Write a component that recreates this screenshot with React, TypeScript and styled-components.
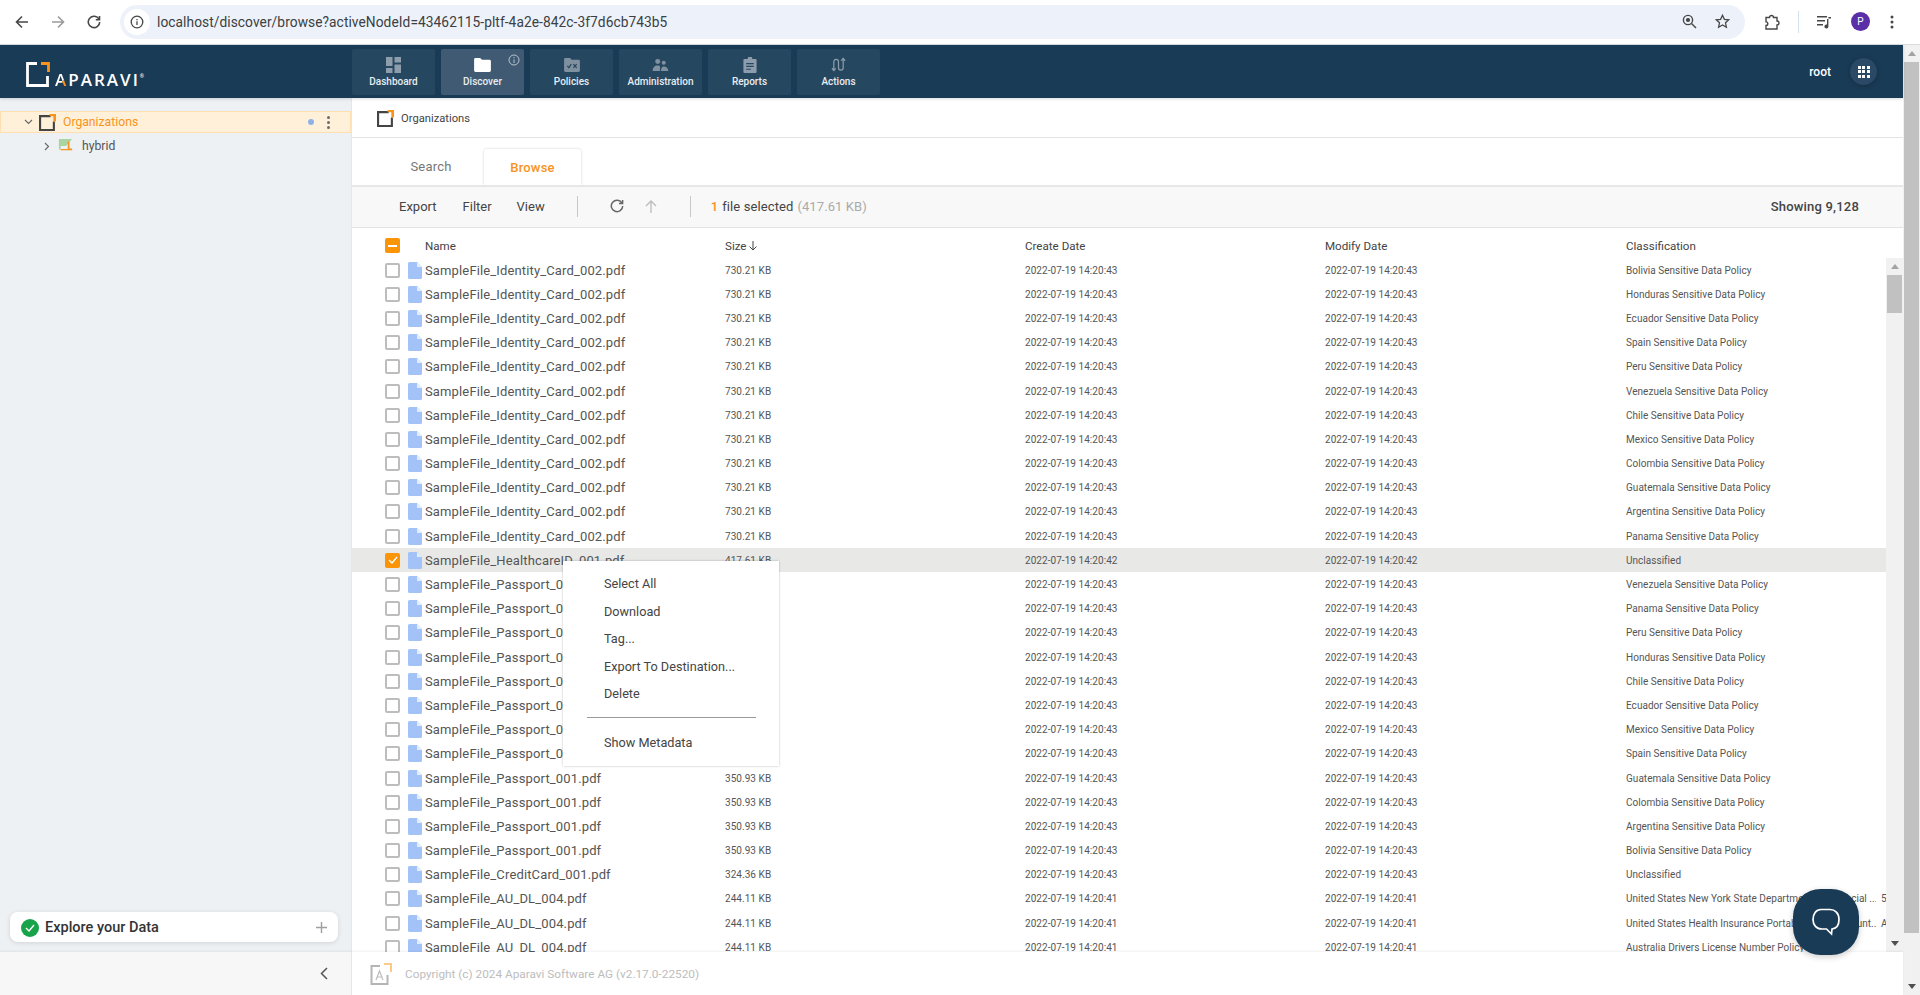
import React from "react";
import styled, { createGlobalStyle } from "styled-components";

const Global = createGlobalStyle`
  html, body { margin: 0; padding: 0; height: 995px; overflow: hidden; background: #fff; }
  * { box-sizing: border-box; }
  body { font-family: Roboto, "Liberation Sans", sans-serif; color: #444; }
`;

const Page = styled.div`
  position: relative; width: 1920px; height: 995px; display: flex; flex-direction: column; overflow: hidden;
`;
const BrowserBar = styled.div`
  height: 45px; flex: none; background: #fff; border-bottom: 1px solid #dadce0; display: flex; align-items: center; padding: 0 0 1px 12px;
`;
const BrowserBtn = styled.div<{ $w?: number }>`
  width: ${p => p.$w ?? 36}px; height: 36px; flex: none; display: flex; align-items: center; justify-content: center;
`;
const Omnibox = styled.div`
  flex: none; margin-left: 16px; width: 1625px; height: 34px; border-radius: 17px; background: #edf2fa; display: flex; align-items: center; padding: 0 6px 0 4px;
`;
const InfoChip = styled.div`
  width: 26px; height: 26px; border-radius: 50%; background: #fff; display: flex; align-items: center; justify-content: center; flex: none;
`;
const Url = styled.span`
  margin-left: 7px; font-size: 13.75px; color: #3c4043; flex: 1; white-space: nowrap; letter-spacing: 0.06px;
`;
const OmniIcon = styled.div`
  width: 33px; display: flex; justify-content: center; flex: none; line-height: 0;
`;
const BarRight = styled.div`
  display: flex; align-items: center; flex: none; margin-left: 10px;
`;
const ExtIcon = styled.div` margin-left: 9px; line-height: 0; `;
const BarSep = styled.div`
  width: 1px; height: 22px; background: #d5e3ee; margin: 0 18px 0 18px;
`;
const Avatar = styled.div`
  width: 19px; height: 19px; border-radius: 50%; background: #5a2ea6; color: #fff; font-size: 10px; display: flex; align-items: center; justify-content: center; margin: 0 20px 0 19px; flex: none;
`;
const BarIcon = styled.div` line-height: 0; `;

const Body = styled.div`
  flex: 1; min-height: 0; display: flex;
`;
const AppColumn = styled.div`
  flex: 1; min-width: 0; display: flex; flex-direction: column;
`;
const OuterScroll = styled.div`
  width: 17px; flex: none; background: #f1f1f1; display: flex; flex-direction: column; align-items: center;
`;
const ArrowBtn = styled.div<{ $h: number }>`
  height: ${p => p.$h}px; flex: none; width: 100%; display: flex; align-items: center; justify-content: center;
`;
const OuterThumb = styled.div`
  width: 15px; height: 871px; background: #c1c1c1; flex: none;
`;
const Spacer = styled.div` flex: 1; `;

const Header = styled.header`
  height: 53px; flex: none; background: #1a3b56; display: flex; align-items: center; box-shadow: 0 1px 3px rgba(0,0,0,.15); position: relative; z-index: 2;
`;
const LogoBox = styled.div`
  width: 352px; flex: none; display: flex; align-items: flex-end; padding: 0 0 3px 26px; height: 37px;
`;
const LogoText = styled.span`
  font-size: 17px; font-weight: 600; color: #fff; letter-spacing: 2px; margin-left: 5px; line-height: 15px; font-family: "Open Sans", sans-serif;
  sup { font-size: 5px; vertical-align: 8px; letter-spacing: 0; }
`;
const LogoA = styled.span`
  background: linear-gradient(125deg, #fff 58%, #f7941d 58%);
  -webkit-background-clip: text; background-clip: text; color: transparent;
`;
const Nav = styled.nav` display: flex; gap: 6px; `;
const NavBtn = styled.div<{ $active?: boolean }>`
  position: relative; width: 83px; height: 46px; border-radius: 2px; background: ${p => p.$active ? "#3f5a72" : "#264760"};
  display: flex; flex-direction: column; align-items: center; padding-top: 7px; color: #e8edf1; font-size: 10px; font-weight: 500;
`;
const NavIcon = styled.div`
  height: 18px; display: flex; align-items: center; justify-content: center; margin-bottom: 2px;
`;
const NavInfo = styled.div`
  position: absolute; top: 5px; right: 4px; line-height: 0;
`;
const HeaderRight = styled.div`
  margin-left: auto; display: flex; align-items: center; padding-right: 26px; color: #fff; font-size: 12px; font-weight: 500; gap: 19px;
`;
const AppsBtn = styled.div`
  width: 27px; height: 27px; border-radius: 50%; background: #2a4966; box-shadow: 0 1px 5px rgba(0,0,0,.25); display: grid; grid-template-columns: repeat(3, 3px); grid-auto-rows: 3px; gap: 1.5px; align-content: center; justify-content: center;
  i { background: #fff; display: block; }
`;

const Content = styled.div` flex: 1; min-height: 0; display: flex; `;
const Sidebar = styled.aside`
  width: 352px; flex: none; background: #edf1f4; border-right: 1px solid #e4e6e8; display: flex; flex-direction: column; padding-top: 13px;
`;
const TreeRow = styled.div<{ $sel?: boolean }>`
  height: ${p => p.$sel ? 22 : 25}px; display: flex; align-items: center; font-size: 12.2px; flex: none;
  color: ${p => p.$sel ? "#f7941d" : "#555"};
  background: ${p => p.$sel ? "#fff0d9" : "transparent"};
  border: ${p => p.$sel ? "1px solid #fde0b2" : "none"};
  padding-left: ${p => p.$sel ? 23 : 44}px;
  padding-top: ${p => p.$sel ? 0 : 1}px;
`;
const TreeIcon = styled.div<{ $mr?: number; $ml?: number }>`
  height: 17px; margin: 0 ${p => p.$mr ?? 7}px 0 ${p => p.$ml ?? 6}px; line-height: 0; flex: none;
`;
const TreeDot = styled.span`
  width: 6px; height: 6px; background: #8fb1e6; border-radius: 50%; margin-left: auto; margin-right: 13px;
`;
const Kebab = styled.div`
  display: flex; flex-direction: column; gap: 2px; margin-right: 20px;
  i { width: 3px; height: 3px; border-radius: 50%; background: #6b6b6b; display: block; }
`;
const ExploreCard = styled.div`
  margin: auto 13px 10px 10px; height: 30px; background: #fff; border-radius: 8px; box-shadow: 0 1px 5px rgba(0,0,0,.12); display: flex; align-items: center; padding: 1px 11px 0 11px; font-size: 14.5px; font-weight: 500; color: #333;
`;
const CheckCircle = styled.div`
  width: 18px; height: 18px; border-radius: 50%; background: #16a34a; display: flex; align-items: center; justify-content: center; margin-right: 6px; flex: none;
`;
const Plus = styled.span`
  margin-left: auto; line-height: 0;
`;

const Main = styled.main` flex: 1; min-width: 0; display: flex; flex-direction: column; position: relative; `;
const Crumb = styled.div`
  height: 40px; flex: none; border-bottom: 1px solid #e3e3e3; display: flex; align-items: center; padding: 2px 0 0 25px; font-size: 11.2px; color: #444; gap: 7px;
`;
const Tabs = styled.div`
  height: 47px; flex: none; display: flex; align-items: flex-end; padding-left: 26px;
`;
const Tab = styled.div<{ $active?: boolean }>`
  width: ${p => p.$active ? 97 : 106}px; height: 36px; display: flex; align-items: center; justify-content: center; font-size: 13px;
  color: ${p => p.$active ? "#f7941d" : "#777"}; font-weight: ${p => p.$active ? 500 : 400};
  background: ${p => p.$active ? "#fff" : "transparent"}; letter-spacing: .2px;
  border-radius: 3px 3px 0 0;
  ${p => p.$active ? "box-shadow: 0 0 3px rgba(0,0,0,.18); position: relative; z-index: 1;" : "padding-bottom: 2px;"}
`;
const Toolbar = styled.div`
  height: 43px; flex: none; background: #f8f8f8; border-top: 2px solid #e6e8e8; border-bottom: 1px solid #e3e3e3; display: flex; align-items: center; font-size: 13px; color: #444; padding-left: 47px; padding-bottom: 2px;
  position: relative; z-index: 2;
`;
const ToolItem = styled.span<{ $gap?: number }>` margin-right: ${p => p.$gap ?? 26}px; `;
const ToolSep = styled.div<{ $ml: number; $mr: number }>`
  width: 1px; height: 21px; background: #c8c8c8; margin-left: ${p => p.$ml}px; margin-right: ${p => p.$mr}px;
`;
const ToolIcon = styled.div<{ $ml?: number }>` line-height: 0; margin-left: ${p => p.$ml ?? 0}px; `;
const SelText = styled.span`
  font-size: 13px; letter-spacing: .1px; b { color: #f7941d; font-weight: 500; margin-right: 4px; } em { color: #aaa; font-style: normal; margin-left: 4px; }
`;
const Showing = styled.span` margin-left: auto; margin-right: 44px; font-weight: 500; font-size: 13px; color: #444; letter-spacing: .2px; `;

const TableWrap = styled.div` flex: 1; min-height: 0; display: flex; flex-direction: column; `;
const Cols = `
  display: grid; grid-template-columns: 23px 17px 300px 300px 300px 301px minmax(0, 1fr); align-items: center; padding-left: 33px;
`;
const HeadRow = styled.div`
  ${Cols}; height: 30px; flex: none; font-size: 11.6px; color: #444; padding-right: 17px; padding-top: 5px;
`;
const HeadCell = styled.span`
  display: flex; align-items: center; gap: 1px;
`;
const HeadName = styled(HeadCell)` grid-column: 2 / 4; padding-left: 17px; `;
const Rows = styled.div` flex: 1; min-height: 0; display: flex; overflow: hidden; `;
const RowList = styled.div` flex: 1; min-width: 0; overflow: hidden; `;
const Row = styled.div<{ $sel?: boolean }>`
  ${Cols}; height: 24.2px; background: ${p => p.$sel ? "#e8e8e6" : "transparent"};
`;
const Box = styled.div<{ $on?: boolean }>`
  width: 15px; height: 15px; border-radius: 2px; border: ${p => p.$on ? "none" : "2px solid #bdbdbd"}; background: ${p => p.$on ? "#fb9506" : "#fff"}; display: flex; align-items: center; justify-content: center; line-height: 0;
`;
const FileIco = styled.div` line-height: 0; width: 14px; `;
const Name = styled.span` font-size: 13px; color: #555; letter-spacing: .14px; white-space: nowrap; `;
const Small = styled.span` font-size: 10px; color: #555; letter-spacing: .05px; white-space: nowrap; `;
const ClassCell = styled.div` display: flex; overflow: hidden; font-size: 10px; color: #555; letter-spacing: .03px; white-space: nowrap; `;
const ClassName = styled.span<{ $clip?: boolean }>`
  flex: none; ${p => p.$clip ? "width: 250px; overflow: hidden; margin-right: 5px;" : ""}
`;
const InnerScroll = styled.div`
  width: 17px; flex: none; background: #f1f1f1; display: flex; flex-direction: column; align-items: center;
`;
const InnerThumb = styled.div` width: 15px; height: 38px; background: #c1c1c1; flex: none; `;

const Footer = styled.footer`
  height: 43px; flex: none; display: flex; background: #fff; position: relative; z-index: 3; box-shadow: 0 -1px 2px rgba(0,0,0,.06);
`;
const FootLeft = styled.div`
  width: 352px; flex: none; background: #f7f7f7; border-right: 1px solid #e4e6e8; display: flex; align-items: center; justify-content: flex-end; padding-right: 23px;
`;
const FootMain = styled.div`
  flex: 1; display: flex; align-items: center; padding-left: 18px; font-size: 11.8px; color: #bdbdbd; gap: 13px;
`;

const Menu = styled.div`
  position: absolute; left: 211px; top: 463px; width: 216px; height: 205px; background: #fff; box-shadow: 0 0 2px rgba(0,0,0,.28); z-index: 5; padding: 9px 0 0 0; font-size: 12.7px; color: #444;
`;
const MenuItem = styled.div`
  height: 27.5px; display: flex; align-items: center; padding-left: 41px;
`;
const MenuSep = styled.div` height: 1px; background: #9a9a9a; margin: 9px 23px 11px 24px; `;
const Chat = styled.div`
  position: absolute; left: 1793px; top: 889px; width: 66px; height: 66px; border-radius: 42%; background: #1a3b56; z-index: 6; display: flex; align-items: center; justify-content: center; box-shadow: 0 2px 6px rgba(0,0,0,.2);
`;

const FileIcon = () => (
  <svg width="14" height="17" viewBox="0 0 14 17"><path d="M1.5 0H9l5 5v10.5a1.5 1.5 0 0 1-1.5 1.5h-11A1.5 1.5 0 0 1 0 15.5v-14A1.5 1.5 0 0 1 1.5 0z" fill="#a3c2f7"/><path d="M9 0l5 5H9z" fill="#e4edfc"/></svg>
);
const OrgIcon = ({ s = 17 }: { s?: number }) => (
  <svg width={s} height={s} viewBox="0 0 16 16"><path d="M0 1h11v2H2v11h11V7h2v9H0z" fill="#444"/><path d="M10 0h6v7h-2.5V2H10z" fill="#f7941d"/></svg>
);

const identity = ["Bolivia","Honduras","Ecuador","Spain","Peru","Venezuela","Chile","Mexico","Colombia","Guatemala","Argentina","Panama"];
const pass1 = ["Venezuela","Panama","Peru","Honduras","Chile","Ecuador","Mexico","Spain"];
const pass2 = ["Guatemala","Colombia","Argentina","Bolivia"];
type R = { n: string; s: string; d: string; c: string; sel?: boolean; x?: string; clip?: boolean };
const p = (c: string) => `${c} Sensitive Data Policy`;
const rows: R[] = [
  ...identity.map(c => ({ n: "SampleFile_Identity_Card_002.pdf", s: "730.21 KB", d: "2022-07-19 14:20:43", c: p(c) })),
  { n: "SampleFile_HealthcareID_001.pdf", s: "417.61 KB", d: "2022-07-19 14:20:42", c: "Unclassified", sel: true },
  ...pass1.map(c => ({ n: "SampleFile_Passport_001.pdf", s: "350.93 KB", d: "2022-07-19 14:20:43", c: p(c) })),
  ...pass2.map(c => ({ n: "SampleFile_Passport_001.pdf", s: "350.93 KB", d: "2022-07-19 14:20:43", c: p(c) })),
  { n: "SampleFile_CreditCard_001.pdf", s: "324.36 KB", d: "2022-07-19 14:20:43", c: "Unclassified" },
  { n: "SampleFile_AU_DL_004.pdf", s: "244.11 KB", d: "2022-07-19 14:20:41", c: "United States New York State Department of Financial ...", clip: true, x: "5" },
  { n: "SampleFile_AU_DL_004.pdf", s: "244.11 KB", d: "2022-07-19 14:20:41", c: "United States Health Insurance Portability and Account...", clip: true, x: "A" },
  { n: "SampleFile_AU_DL_004.pdf", s: "244.11 KB", d: "2022-07-19 14:20:41", c: "Australia Drivers License Number Policy" },
];

const navs: { l: string; i: React.ReactNode; a?: boolean }[] = [
  { l: "Dashboard", i: <svg width="15" height="16" viewBox="0 0 15 16" fill="#8d9dab"><path d="M0 0h6.5v9H0zM8.5 0H15v5.5H8.5zM8.5 7.5H15V16H8.5zM0 11h6.5v5H0z"/></svg> },
  { l: "Discover", a: true, i: <svg width="17" height="14" viewBox="0 0 18 15" fill="#fff"><path d="M1.5 0h5L8.5 2h8A1.5 1.5 0 0 1 18 3.5v10a1.5 1.5 0 0 1-1.5 1.5h-15A1.5 1.5 0 0 1 0 13.5v-12A1.5 1.5 0 0 1 1.5 0z"/></svg> },
  { l: "Policies", i: <svg width="16" height="14" viewBox="0 0 17 15"><path d="M1.5 0h5L8 2h7.5A1.5 1.5 0 0 1 17 3.5v10a1.5 1.5 0 0 1-1.5 1.5h-14A1.5 1.5 0 0 1 0 13.5v-12A1.5 1.5 0 0 1 1.5 0z" fill="#7f909f"/><path d="M3.5 8.5l1.6 2 2.6-4M10 6.5l3.5 4M13.5 6.5l-3.5 4" stroke="#264760" strokeWidth="1.3" fill="none"/></svg> },
  { l: "Administration", i: <svg width="17" height="12" viewBox="0 0 17 13" fill="#7f909f"><circle cx="5.5" cy="2.7" r="2.7"/><circle cx="12" cy="4" r="2.2"/><path d="M0 13c0-4 2.2-6 5.5-6S8 8 8 13zM9 13c0-3 1-5 3-5s5 1.5 5 5z"/></svg> },
  { l: "Reports", i: <svg width="14" height="16" viewBox="0 0 14 17"><path d="M1 2h3.5a2.5 2.5 0 0 1 5 0H13a1 1 0 0 1 1 1v13a1 1 0 0 1-1 1H1a1 1 0 0 1-1-1V3a1 1 0 0 1 1-1z" fill="#8d9dab"/><path d="M3 7h8M3 10h8M3 13h5" stroke="#264760" strokeWidth="1.2"/></svg> },
  { l: "Actions", i: <svg width="15" height="15" viewBox="0 0 14 16" fill="none" stroke="#8d9dab" strokeWidth="1.3"><path d="M2 14.5V5a2.5 2.5 0 0 1 5 0v6.5a2.5 2.5 0 0 0 5 0V1.5"/><path d="M0 12l2 2.5L4 12M10 4l2-2.5L14 4"/></svg> },
];

export default function App() {
  return (
    <Page>
      <Global />
      <BrowserBar>
        <BrowserBtn $w={20}>
          <svg width="14" height="14" viewBox="0 0 14 14" fill="none" stroke="#474747" strokeWidth="1.6"><path d="M13 7H2M7 1.5L1.5 7 7 12.5"/></svg>
        </BrowserBtn>
        <BrowserBtn $w={52}>
          <svg width="14" height="14" viewBox="0 0 14 14" fill="none" stroke="#9a9a9a" strokeWidth="1.6"><path d="M1 7h11M7 1.5L12.5 7 7 12.5"/></svg>
        </BrowserBtn>
        <BrowserBtn $w={20}>
          <svg width="14" height="14" viewBox="0 0 14 14" fill="none" stroke="#474747" strokeWidth="1.6"><path d="M12 4.2A5.7 5.7 0 1 0 12.7 7"/><path d="M12.5 1v3.7H8.8" /></svg>
        </BrowserBtn>
        <Omnibox>
          <InfoChip>
            <svg width="14" height="14" viewBox="0 0 14 14" fill="none" stroke="#474747" strokeWidth="1.3"><circle cx="7" cy="7" r="5.8"/><path d="M7 6.2V10M7 4v1.2"/></svg>
          </InfoChip>
          <Url>localhost/discover/browse?activeNodeId=43462115-pltf-4a2e-842c-3f7d6cb743b5</Url>
          <OmniIcon>
            <svg width="15" height="15" viewBox="0 0 15 15" fill="none" stroke="#474747" strokeWidth="1.4"><circle cx="6" cy="6" r="4.6"/><circle cx="6" cy="6" r="1.4" fill="#474747"/><path d="M9.5 9.5l4.5 4.5"/></svg>
          </OmniIcon>
          <OmniIcon>
            <svg width="15" height="15" viewBox="0 0 15 15" fill="none" stroke="#474747" strokeWidth="1.3"><path d="M7.5 1.3l1.9 4 4.3.5-3.2 3 .9 4.4-3.9-2.2-3.9 2.2.9-4.4-3.2-3 4.3-.5z"/></svg>
          </OmniIcon>
        </Omnibox>
        <BarRight>
          <ExtIcon>
            <svg width="16" height="16" viewBox="0 0 16 16" fill="none" stroke="#474747" strokeWidth="1.4"><path d="M2 3.5h3.5a2 2 0 0 1 4 0H13V7a2 2 0 0 1 0 4v4H2v-3.5a1.8 1.8 0 0 0 0-3.6z"/></svg>
          </ExtIcon>
          <BarSep />
          <BarIcon>
            <svg width="15" height="14" viewBox="0 0 15 14" fill="#474747"><path d="M0 1h10v1.5H0zM0 5h8v1.5H0zM0 9h6v1.5H0z"/><path d="M10 4h1.4v7.5a2 2 0 1 1-1.4-1.9zM11.4 2H14v1.5h-2.6z"/></svg>
          </BarIcon>
          <Avatar>P</Avatar>
          <BarIcon>
            <svg width="4" height="14" viewBox="0 0 4 14" fill="#474747"><circle cx="2" cy="2" r="1.5"/><circle cx="2" cy="7" r="1.5"/><circle cx="2" cy="12" r="1.5"/></svg>
          </BarIcon>
        </BarRight>
      </BrowserBar>
      <Body>
        <AppColumn>
          <Header>
            <LogoBox>
              <svg width="24" height="25" viewBox="0 0 24 25" fill="none" strokeWidth="2.8"><path d="M11 1.5H1.5v22h20V14" stroke="#fff"/><path d="M15 1.5h7.5V10" stroke="#f7941d"/></svg>
              <LogoText><LogoA>A</LogoA>PARAVI<sup>®</sup></LogoText>
            </LogoBox>
            <Nav>
              {navs.map(n => (
                <NavBtn key={n.l} $active={n.a}>
                  <NavIcon>{n.i}</NavIcon>
                  {n.l}
                  {n.a && <NavInfo><svg width="12" height="12" viewBox="0 0 12 12" fill="none" stroke="#c4ced6" strokeWidth=".9"><circle cx="6" cy="6" r="5"/><path d="M6 5.3V9M6 3v1.1"/></svg></NavInfo>}
                </NavBtn>
              ))}
            </Nav>
            <HeaderRight>
              root
              <AppsBtn>{Array.from({ length: 9 }).map((_, i) => <i key={i} />)}</AppsBtn>
            </HeaderRight>
          </Header>
          <Content>
            <Sidebar>
              <TreeRow $sel>
                <svg width="9" height="6" viewBox="0 0 9 6" fill="none" stroke="#666" strokeWidth="1.1"><path d="M1 1l3.5 3.5L8 1"/></svg>
                <TreeIcon><OrgIcon /></TreeIcon>
                Organizations
                <TreeDot />
                <Kebab><i /><i /><i /></Kebab>
              </TreeRow>
              <TreeRow>
                <svg width="6" height="9" viewBox="0 0 6 9" fill="none" stroke="#666" strokeWidth="1.1"><path d="M1 1l3.5 3.5L1 8"/></svg>
                <TreeIcon $ml={8} $mr={9}>
                  <svg width="15" height="15" viewBox="0 0 17 15"><path d="M1 0h15L9 8H3v4H1z" fill="#a9d5a2"/><path d="M11 3h2v8h3v2H3v-1.5h8z" fill="#f7941d"/></svg>
                </TreeIcon>
                hybrid
              </TreeRow>
              <ExploreCard>
                <CheckCircle>
                  <svg width="10" height="8" viewBox="0 0 10 8" fill="none" stroke="#fff" strokeWidth="1.4"><path d="M1 4l3 3 5-6"/></svg>
                </CheckCircle>
                Explore your Data
                <Plus><svg width="11" height="11" viewBox="0 0 11 11" stroke="#9f9f9f" strokeWidth="1.4"><path d="M5.5 0v11M0 5.5h11"/></svg></Plus>
              </ExploreCard>
            </Sidebar>
            <Main>
              <Crumb><OrgIcon />Organizations</Crumb>
              <Tabs>
                <Tab>Search</Tab>
                <Tab $active>Browse</Tab>
              </Tabs>
              <Toolbar>
                <ToolItem>Export</ToolItem>
                <ToolItem $gap={25}>Filter</ToolItem>
                <ToolItem $gap={0}>View</ToolItem>
                <ToolSep $ml={32} $mr={32} />
                <ToolIcon><svg width="14" height="14" viewBox="0 0 14 14" fill="none" stroke="#666" strokeWidth="1.5"><path d="M12 4.2A5.7 5.7 0 1 0 12.7 7"/><path d="M12.6 1v3.6H9" /></svg></ToolIcon>
                <ToolIcon $ml={21}><svg width="12" height="13" viewBox="0 0 12 13" fill="none" stroke="#bbb" strokeWidth="1.3"><path d="M6 13V1M1 6l5-5 5 5"/></svg></ToolIcon>
                <ToolSep $ml={33} $mr={20} />
                <SelText><b>1</b>file selected<em>(417.61 KB)</em></SelText>
                <Showing>Showing 9,128</Showing>
              </Toolbar>
              <TableWrap>
                <HeadRow>
                  <Box $on><svg width="9" height="2" viewBox="0 0 9 2"><path d="M0 0h9v2H0z" fill="#fff"/></svg></Box>
                  <HeadName>Name</HeadName>
                  <HeadCell>Size<svg width="10" height="10" viewBox="0 0 10 10" fill="none" stroke="#444" strokeWidth="1"><path d="M5 0v9M1.5 5.5L5 9l3.5-3.5"/></svg></HeadCell>
                  <HeadCell>Create Date</HeadCell>
                  <HeadCell>Modify Date</HeadCell>
                  <HeadCell>Classification</HeadCell>
                </HeadRow>
                <Rows>
                  <RowList>
                    {rows.map((r, i) => (
                      <Row key={i} $sel={r.sel}>
                        <Box $on={r.sel}>{r.sel && <svg width="10" height="8" viewBox="0 0 10 8" fill="none" stroke="#fff" strokeWidth="1.4"><path d="M1 4l3 3 5-6"/></svg>}</Box>
                        <FileIco><FileIcon /></FileIco>
                        <Name>{r.n}</Name>
                        <Small>{r.s}</Small>
                        <Small>{r.d}</Small>
                        <Small>{r.d}</Small>
                        <ClassCell><ClassName $clip={r.clip}>{r.c}</ClassName>{r.x}</ClassCell>
                      </Row>
                    ))}
                  </RowList>
                  <InnerScroll>
                    <ArrowBtn $h={17}><svg width="8" height="5" viewBox="0 0 8 5"><path d="M4 0l4 5H0z" fill="#a3a3a3"/></svg></ArrowBtn>
                    <InnerThumb />
                    <Spacer />
                    <ArrowBtn $h={17}><svg width="8" height="5" viewBox="0 0 8 5"><path d="M0 0h8L4 5z" fill="#505050"/></svg></ArrowBtn>
                  </InnerScroll>
                </Rows>
              </TableWrap>
              <Menu>
                <MenuItem>Select All</MenuItem>
                <MenuItem>Download</MenuItem>
                <MenuItem>Tag...</MenuItem>
                <MenuItem>Export To Destination...</MenuItem>
                <MenuItem>Delete</MenuItem>
                <MenuSep />
                <MenuItem>Show Metadata</MenuItem>
              </Menu>
            </Main>
          </Content>
          <Footer>
            <FootLeft>
              <svg width="8" height="13" viewBox="0 0 8 13" fill="none" stroke="#555" strokeWidth="1.5"><path d="M7 1L1.5 6.5 7 12"/></svg>
            </FootLeft>
            <FootMain>
              <svg width="22" height="22" viewBox="0 0 22 22" fill="none"><path d="M10 3H1.5v18h16v-9" stroke="#b5b5b5" strokeWidth="2"/><path d="M14 1h7v8" stroke="#fbc98a" strokeWidth="2"/><path d="M6 17l3.5-9 3.5 9M7.4 14h4.2" stroke="#bdbdbd" strokeWidth="1.2"/></svg>
              Copyright (c) 2024 Aparavi Software AG (v2.17.0-22520)
            </FootMain>
          </Footer>
        </AppColumn>
        <OuterScroll>
          <ArrowBtn $h={17}><svg width="8" height="5" viewBox="0 0 8 5"><path d="M4 0l4 5H0z" fill="#a3a3a3"/></svg></ArrowBtn>
          <OuterThumb />
          <Spacer />
          <ArrowBtn $h={17}><svg width="8" height="5" viewBox="0 0 8 5"><path d="M0 0h8L4 5z" fill="#505050"/></svg></ArrowBtn>
        </OuterScroll>
      </Body>
      <Chat>
        <svg width="30" height="30" viewBox="0 0 30 30" fill="none" stroke="#fff" strokeWidth="1.7"><path d="M10 2.5h9c5 0 9 3.5 9 10s-3 9-7 9.5l-.5 5-5-5H11c-5.5 0-9-4-9-9.5s3-10 8-10z"/></svg>
      </Chat>
    </Page>
  );
}
